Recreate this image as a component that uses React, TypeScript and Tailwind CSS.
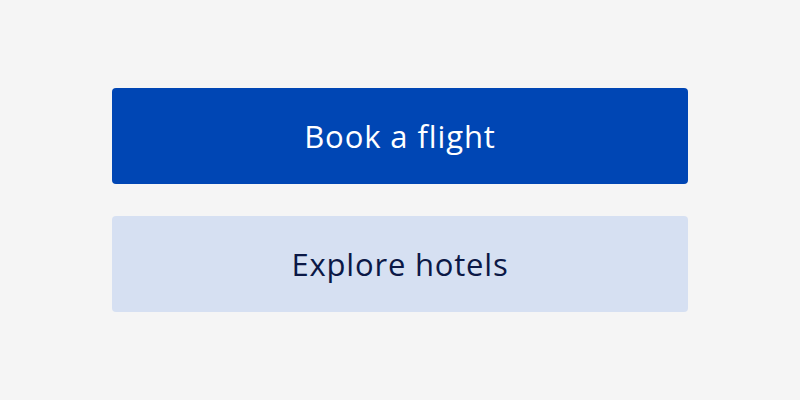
import React from "react";

export default function App() {
  return (
    <div className="w-[800px] h-[400px] bg-[#f5f5f5] flex flex-col items-center justify-center gap-8" style={{ fontFamily: "'Open Sans', 'Noto Sans', sans-serif" }}>
      <button className="w-[576px] h-24 rounded bg-[#0046b4] text-white text-[31px] font-medium tracking-[0.9px] flex items-center justify-center">
        Book a flight
      </button>
      <button className="w-[576px] h-24 rounded bg-[#d6e0f2] text-[#0b1846] text-[31px] font-medium tracking-[0.8px] flex items-center justify-center">
        Explore hotels
      </button>
    </div>
  );
}
